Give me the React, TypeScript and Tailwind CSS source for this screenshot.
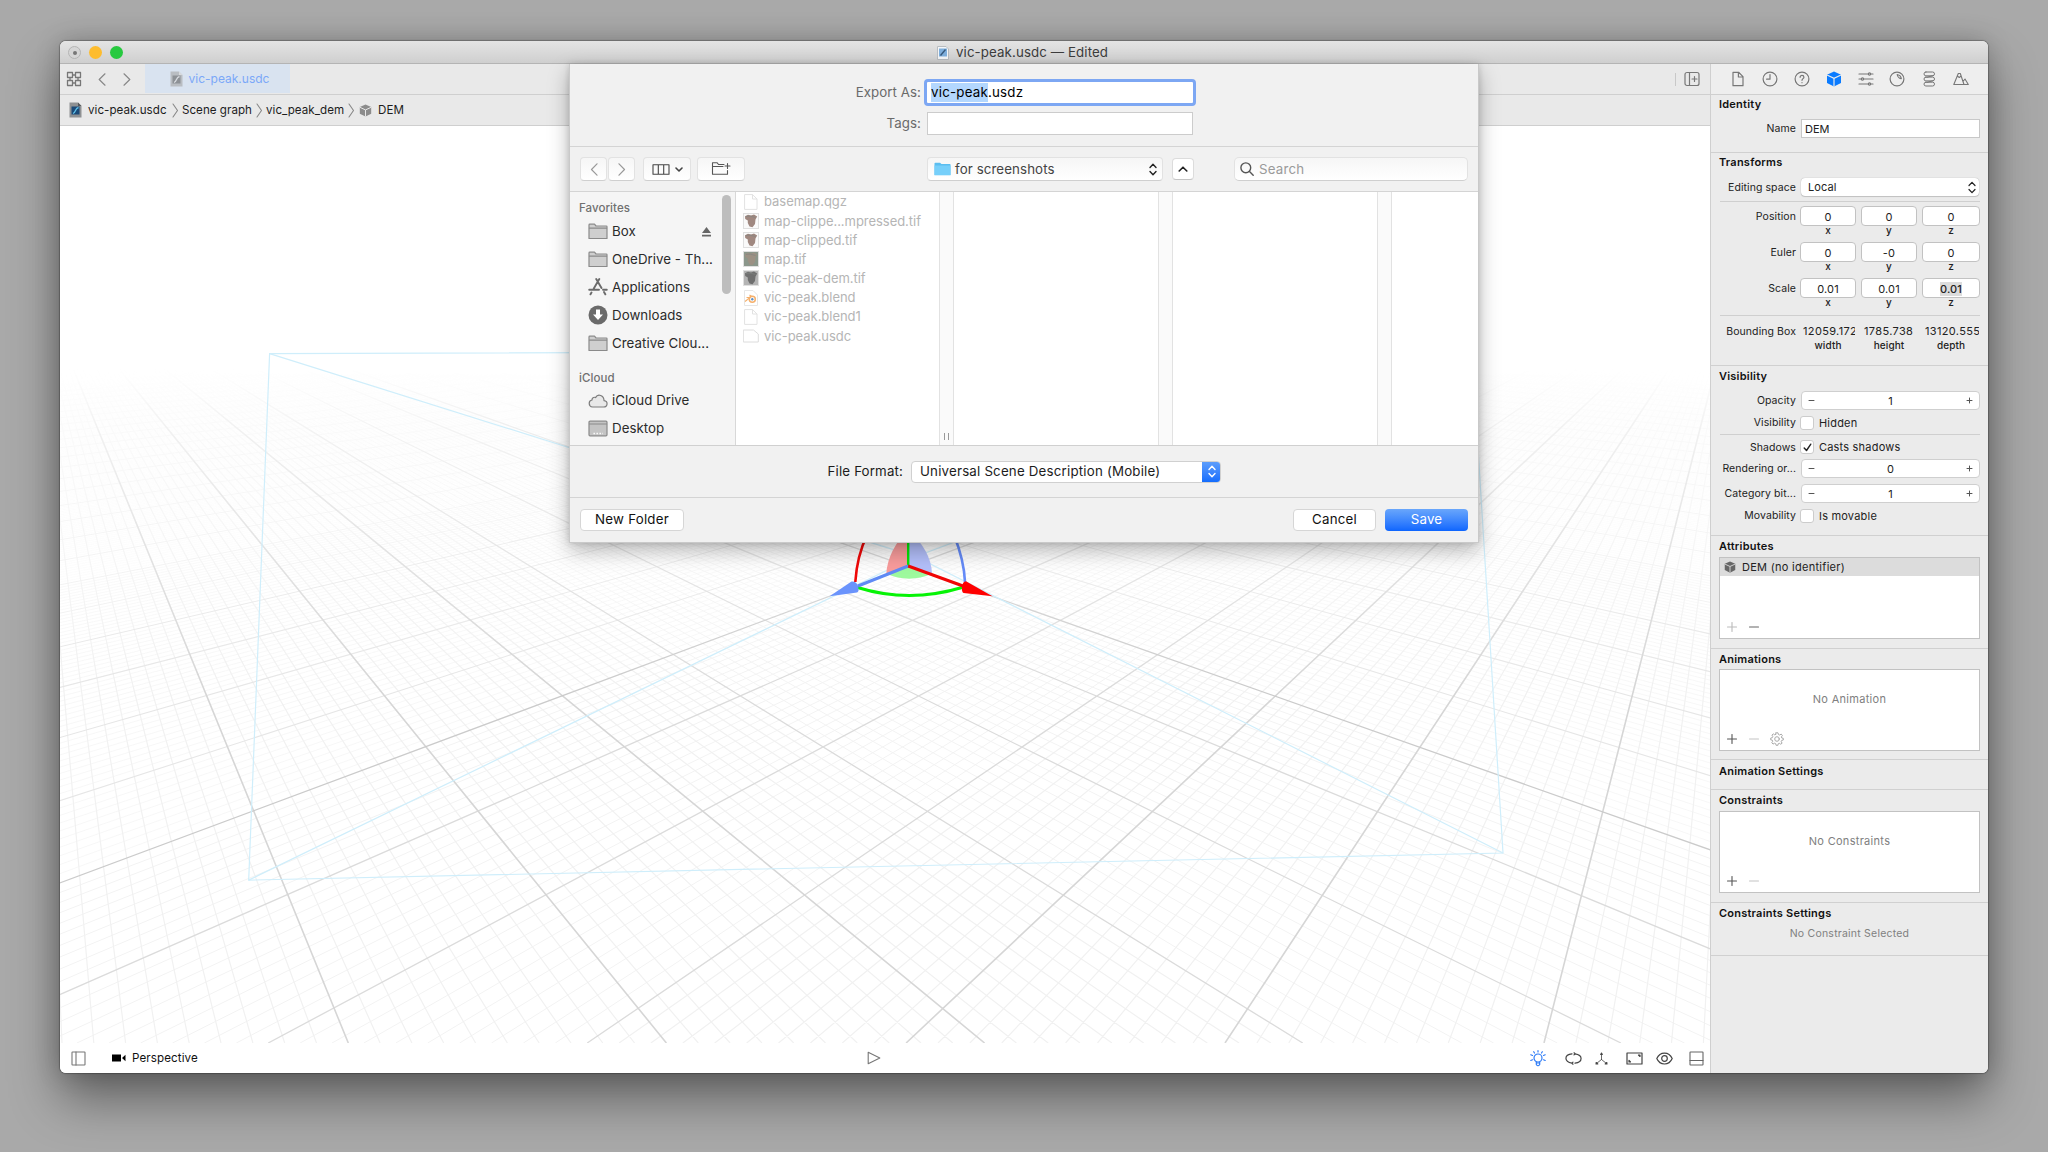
import React from "react";
import { clsx } from "clsx";

const HORIZON = 255.5;
const TOP = 350;
const BOTTOM = 1043;

/* Perspective ground plane: every family of parallels meets in one point on the horizon. */
function family(vx: number, base: number, dir: number, step: number, from: number, to: number, skip: number) {
  let d = "";
  for (let i = from; i <= to; i++) {
    if (skip && i % skip === 0) continue;
    const s = dir * (base + i * step);
    const x1 = vx + s * (TOP - HORIZON);
    const x2 = vx + s * (BOTTOM - HORIZON);
    d += `M${x1.toFixed(1)} ${TOP}L${x2.toFixed(1)} ${BOTTOM}`;
  }
  return d;
}

const LEFT_VP = 27;
const RIGHT_VP = 1744;
const minor = (from: number, to: number) =>
  family(LEFT_VP, 2.832, 1, 0.0404, from, to, 10) + family(RIGHT_VP, 2.684, -1, 0.0405, from, to, 10);
const major = (from: number, to: number) =>
  family(LEFT_VP, 2.832, 1, 0.404, from, to, 0) + family(RIGHT_VP, 2.684, -1, 0.405, from, to, 0);

function Scene() {
  return (
    <svg viewBox="60 126 1650 917" className="block h-[917px] w-[1650px] bg-white">
      <defs>
        <linearGradient id="fade" x1="0" y1="126" x2="0" y2="1043" gradientUnits="userSpaceOnUse">
          <stop offset="0.265" stopColor="#000" />
          <stop offset="0.33" stopColor="#555" />
          <stop offset="0.46" stopColor="#aaa" />
          <stop offset="0.62" stopColor="#fff" />
        </linearGradient>
        <mask id="ground" maskUnits="userSpaceOnUse" x="60" y="126" width="1650" height="917">
          <rect x="60" y="126" width="1650" height="917" fill="url(#fade)" />
        </mask>
      </defs>
      <g mask="url(#ground)" fill="none">
        <path d={minor(60, 260)} stroke="#fafafa" strokeWidth="0.8" />
        <path d={minor(1, 59)} stroke="#f6f6f6" strokeWidth="0.9" />
        <path d={minor(-30, -1)} stroke="#f3f3f3" strokeWidth="1" />
        <path d={minor(-75, -31)} stroke="#f1f1f1" strokeWidth="1.2" />
        <path d={major(5, 24)} stroke="#efefef" strokeWidth="1" />
        <path d={major(1, 4)} stroke="#e6e6e6" strokeWidth="1.1" />
        <path d={major(-3, -1)} stroke="#dbdbdb" strokeWidth="1.3" />
        <path d={major(-7, -4)} stroke="#d6d6d6" strokeWidth="1.6" />
        <path d={major(0, 0)} stroke="#cbcbcb" strokeWidth="1.3" />
      </g>
      <g fill="none" stroke="#cfeefb" strokeWidth="1.2">
        <path d="M269.6 353.6L1472 350L1503 853L248.7 880.1Z" />
        <path d="M269.6 353.6L915.5 556.5L1472 350M248.7 880.1L915.5 556.5L1503 853" />
      </g>
      <path d="M908 530Q888 550 886.3 573.5L908.2 566Z" fill="#f99c9c" />
      <path d="M908 530Q931 550 932 573.5L908.2 566Z" fill="#b3bffa" />
      <path d="M886.3 573.8Q909 583.5 932 573.8L908.2 566Z" fill="#9df99d" />
      <g fill="none">
        <path d="M867 535Q857 556 855.3 582" stroke="#f00808" strokeWidth="2.6" />
        <path d="M954 535Q964 560 965 582" stroke="#658bf8" strokeWidth="2.6" />
        <path d="M857.5 587.5Q909 603.5 962 587.5" stroke="#06f306" strokeWidth="3" />
        <path d="M908.2 566V530" stroke="#06e606" strokeWidth="2.4" />
        <path d="M908.2 566L858 586" stroke="#5f8af5" strokeWidth="3" />
        <path d="M908.2 566L963 586" stroke="#f00505" strokeWidth="3" />
      </g>
      <path d="M829.6 596.2L851.5 581.5Q856.5 581 858 586Q859.5 591.5 857 592.5Z" fill="#6a93fc" />
      <path d="M992.5 596.2L966 581.3Q962.5 581.5 962 587Q961.5 592 963.5 593Z" fill="#fe0000" />
    </svg>
  );
}

function Svg({ w, h, className, children, sw = 1.2 }: { w: number; h: number; className?: string; children: React.ReactNode; sw?: number }) {
  return (
    <svg
      width={w}
      height={h}
      viewBox={`0 0 ${w} ${h}`}
      fill="none"
      stroke="currentColor"
      strokeWidth={sw}
      strokeLinecap="round"
      strokeLinejoin="round"
      className={clsx("block shrink-0", className)}
    >
      {children}
    </svg>
  );
}

function Cube({ className, size = 13, line = "#ebebeb" }: { className?: string; size?: number; line?: string }) {
  return (
    <svg width={size} height={size} viewBox="0 0 16 16" className={clsx("block shrink-0", className)}>
      <path d="M8 .5L15 3.8V12L8 15.5L1 12V3.8Z" fill="currentColor" />
      <path d="M1 4L8 7.3L15 4M8 7.3V15.5" fill="none" stroke={line} strokeWidth="1.2" />
    </svg>
  );
}

function FileBadge({ dim }: { dim?: boolean }) {
  return (
    <svg width="13" height="16" viewBox="0 0 13 16" className="block shrink-0">
      <path d="M.5 .5H9L12.5 4V15.5H.5Z" fill={dim ? "#b9bdc2" : "#8f9193"} />
      <path d="M9 .5L12.5 4H9Z" fill={dim ? "#d9dbde" : "#55585b"} />
      <rect x="2.5" y="4.5" width="8" height="8" fill={dim ? "#8d9196" : "#1b4a78"} />
      <path d="M4 11.5Q5.5 11 6.5 8.5T9.5 5.5" stroke={dim ? "#d8dbe0" : "#5fc0e8"} strokeWidth="1.3" fill="none" />
    </svg>
  );
}

function UpDown({ className, sw = 1.4 }: { className?: string; sw?: number }) {
  return (
    <Svg w={8} h={13} sw={sw} className={className}>
      <path d="M1 4.5L4 1.3L7 4.5M1 8.5L4 11.7L7 8.5" />
    </Svg>
  );
}

/* ---------- inspector ---------- */

const tabIcons: { key: string; icon: React.ReactNode }[] = [
  { key: "file", icon: <Svg w={16} h={16}><path d="M3 1.3H8.6L13 5.6V14.7H3ZM8.4 1.5V6H12.8" /></Svg> },
  { key: "history", icon: <Svg w={16} h={16}><circle cx="8" cy="8" r="6.9" /><path d="M8 3.6V8.2H4.6" /></Svg> },
  { key: "help", icon: <Svg w={16} h={16}><circle cx="8" cy="8" r="6.9" /><path d="M6.1 6.3C6.1 3.8 9.9 3.9 9.9 6.2C9.9 7.6 8 7.7 8 9.3M8 11.5V11.7" /></Svg> },
  { key: "node", icon: <Cube size={16} className="text-[#0a7bff]" /> },
  { key: "sliders", icon: <Svg w={16} h={16}><path d="M1 3H10M13 3H15M1 8H3M6 8H15M1 13H10M13 13H15" /><circle cx="11.5" cy="3" r="1.1" /><circle cx="4.5" cy="8" r="1.1" /><circle cx="11.5" cy="13" r="1.1" /></Svg> },
  { key: "material", icon: <Svg w={16} h={16}><circle cx="8" cy="8" r="6.9" /><path d="M8.2 3.5C10.5 4 12 5.5 12.3 7.7C11 7.5 8.5 6 8.2 3.5Z" /></Svg> },
  { key: "physics", icon: <Svg w={16} h={16} sw={1}><rect x="3" y="1" width="10.500" height="3.800" rx="1.900" /><rect x="3" y="6.100" width="10.500" height="3.800" rx="1.900" /><rect x="3" y="11.200" width="10.500" height="3.800" rx="1.900" /><path d="M12 4.600L6 6.300M12 9.700L6 11.400" /></Svg> },
  { key: "scene", icon: <Svg w={16} h={16} sw={1.1}><path d="M.8 13.5L5.300 2.500H7.300L11 13.500ZM10 10.500L12 8L15.300 13.500H11M4.300 5L6.300 6.500L8 5" /></Svg> },
];

function Section({ title, className, titleClass, children }: { title: string; className: string; titleClass: string; children?: React.ReactNode }) {
  return (
    <section className={clsx("shrink-0 border-b border-[#d0d0d0]", className)}>
      <h2 className={clsx("flex items-center pl-[8px] text-[11px] font-semibold tracking-[0.23px] text-[#111]", titleClass)}>{title}</h2>
      {children}
    </section>
  );
}

const rowLabel = "w-[85px] shrink-0 whitespace-nowrap text-right text-[10.5px] tracking-[0.08px] text-[#222]";

function Row({ label, className, children }: { label: string; className?: string; children: React.ReactNode }) {
  return (
    <div className={clsx("flex items-center pr-2", className)}>
      <span className={clsx(rowLabel, "mr-[5px] pt-px")}>{label}</span>
      {children}
    </div>
  );
}

function Triple({ label, values, sub, selected, plain, className }: { label: string; values: string[]; sub: string[]; selected?: boolean; plain?: boolean; className?: string }) {
  return (
    <div className={className}>
      <div className="flex h-5 items-center">
        <span className={clsx(rowLabel, "mr-[4px] pt-px")}>{label}</span>
        <div className="grid grid-cols-[56px_56px_58px] gap-[5px]">
          {values.map((v, i) =>
            plain ? (
              <span key={i} className="ml-[3px] mr-px h-5 overflow-hidden whitespace-nowrap text-[11px] leading-5 tracking-[0.35px] text-[#222]">{v}</span>
            ) : (
              <span key={i} className="flex h-5 items-center justify-center rounded-[4px] border border-[#c2c2c2] bg-white pt-px text-[11px] text-[#222]">
                <span className={clsx("leading-[14px] tracking-[0.15px]", selected && i === 2 && "bg-[#dcdcdc] font-medium")}>{v}</span>
              </span>
            ),
          )}
        </div>
      </div>
      <div className="ml-[89px] grid h-[10px] grid-cols-[56px_56px_58px] gap-[5px]">
        {sub.map((s) => (
          <span key={s} className="text-center text-[10px] font-medium leading-[9px] tracking-[0.1px] text-[#222]">{s}</span>
        ))}
      </div>
    </div>
  );
}

function Stepper({ value }: { value: string }) {
  return (
    <div className="flex h-[19px] w-[179px] items-center justify-between rounded-[4px] border border-[#cfcfcf] bg-white px-[6px] text-[#555]">
      <Svg w={7} h={7} sw={1}><path d="M1 3.5H6" /></Svg>
      <span className="pt-px text-[11px] text-[#222]">{value}</span>
      <Svg w={7} h={7} sw={1}><path d="M1 3.5H6M3.5 1V6" /></Svg>
    </div>
  );
}

function Check({ label, on }: { label: string; on?: boolean }) {
  return (
    <div className="flex items-center gap-[5px]">
      <span className="-ml-px flex h-[14px] w-[14px] items-center justify-center rounded-[3px] border border-[#cccccc] bg-white text-[#222]">
        {on && <Svg w={9} h={9} sw={1.4}><path d="M1.2 5L3.5 7.5L7.8 1.2" /></Svg>}
      </span>
      <span className="pt-px text-[11px] tracking-[0.2px] text-[#222]">{label}</span>
    </div>
  );
}

function Plus({ faint }: { faint?: boolean }) {
  return <Svg w={10} h={10} sw={1.1} className={faint ? "text-[#bbbbbb]" : "text-[#555]"}><path d="M.5 5H9.5M5 .5V9.5" /></Svg>;
}
function Minus({ faint }: { faint?: boolean }) {
  return <Svg w={10} h={10} sw={1.1} className={faint ? "text-[#c4c4c4]" : "text-[#666]"}><path d="M.5 5H9.5" /></Svg>;
}

function ListBox({ children, footer }: { children: React.ReactNode; footer: React.ReactNode }) {
  return (
    <div className="ml-[8px] flex h-[82px] w-[261px] flex-col border border-[#c2c2c2] bg-white">
      <div className="flex-1">{children}</div>
      <div className="flex h-[23px] items-center gap-3 pl-[7px]">{footer}</div>
    </div>
  );
}

function Gear() {
  return (
    <Svg w={14} h={14} sw={1} className="-ml-px text-[#aaaaaa]">
      <path d="M6 .8H8L8.4 2.5L9.6 3L11.2 2.1L12.4 3.5L11.4 4.9L11.8 6L13.3 6.3V8L11.7 8.4L11.2 9.6L12.1 11.2L10.7 12.2L9.3 11.3L8.2 11.8L7.9 13.3H6.1L5.7 11.7L4.5 11.2L3 12.1L1.8 10.7L2.7 9.3L2.2 8.1L.7 7.8V6.1L2.3 5.7L2.8 4.5L1.9 3.1L3.3 1.9L4.7 2.8L5.7 2.4Z" />
      <circle cx="7" cy="7" r="2.3" />
    </Svg>
  );
}

function Inspector() {
  return (
    <aside className="flex w-[278px] shrink-0 flex-col border-l border-[#cfcfcf] bg-[#ebebeb]">
      <div className="flex h-[31px] shrink-0 items-center border-b border-[#cfcfcf] bg-[#eeeeee] pl-[11px] text-[#777]">
        {tabIcons.map((t) => (
          <div key={t.key} className="flex w-[31.9px] justify-center">{t.icon}</div>
        ))}
      </div>
      <Section title="Identity" className="h-[58px]" titleClass="h-[19px]">
        <Row label="Name" className="mt-[5px] h-[19px]">
          <div className="flex h-[19px] w-[180px] items-center border border-[#c8c8c8] bg-white pl-[3px] pt-px text-[11px] text-[#222]">DEM</div>
        </Row>
      </Section>
      <Section title="Transforms" className="h-[213px]" titleClass="h-[19px]">
        <Row label="Editing space" className="mt-[6px] h-[18px]">
          <div className="flex h-[18px] w-[178px] items-center justify-between rounded-[4px] bg-white pl-[7px] pr-[3px] text-[11px] tracking-[0.1px] text-[#222] shadow-[0_0_1px_rgba(0,0,0,.35),0_1px_1px_rgba(0,0,0,.15)]">
            Local
            <UpDown sw={1.2} />
          </div>
        </Row>
        <div className="ml-[9px] mr-2 mt-[5px] h-px bg-[#cfcfcf]" />
        <Triple className="mt-[4px]" label="Position" values={["0", "0", "0"]} sub={["x", "y", "z"]} />
        <Triple className="mt-[6px]" label="Euler" values={["0", "-0", "0"]} sub={["x", "y", "z"]} />
        <Triple className="mt-[6px]" label="Scale" values={["0.01", "0.01", "0.01"]} sub={["x", "y", "z"]} selected />
        <div className="ml-[9px] mr-2 mt-[7px] h-px bg-[#cfcfcf]" />
        <Triple className="mt-[5px]" label="Bounding Box" values={["12059.172", "1785.738", "13120.555"]} sub={["width", "height", "depth"]} plain />
      </Section>
      <Section title="Visibility" className="h-[170px]" titleClass="h-[20px]">
        <Row label="Opacity" className="mt-[5px] h-[19px]"><Stepper value="1" /></Row>
        <Row label="Visibility" className="mt-[3px] h-[19px]"><Check label="Hidden" /></Row>
        <div className="ml-[9px] mr-2 mt-[2px] h-px bg-[#cfcfcf]" />
        <Row label="Shadows" className="mt-[3px] h-[18px]"><Check label="Casts shadows" on /></Row>
        <Row label="Rendering or..." className="mt-[3px] h-[19px]"><Stepper value="0" /></Row>
        <Row label="Category bit..." className="mt-[6px] h-[19px]"><Stepper value="1" /></Row>
        <Row label="Movability" className="mt-[3px] h-[19px]"><Check label="Is movable" /></Row>
      </Section>
      <Section title="Attributes" className="h-[113px]" titleClass="h-[21px]">
        <ListBox footer={<><Plus faint /><Minus /></>}>
          <div className="flex h-[18px] items-center bg-[#dcdcdc] pl-[4px] text-[11px] tracking-[0.28px] text-[#222]">
            <Cube size={12} line="#dcdcdc" className="mr-[6px] text-[#666]" />
            <span className="pt-px">DEM (no identifier)</span>
          </div>
        </ListBox>
      </Section>
      <Section title="Animations" className="h-[111px]" titleClass="h-[20px]">
        <ListBox footer={<><Plus /><Minus faint /><Gear /></>}>
          <div className="pt-[20px] text-center text-[11px] leading-[18px] tracking-[0.3px] text-[#808080]">No Animation</div>
        </ListBox>
      </Section>
      <Section title="Animation Settings" className="h-[30px]" titleClass="h-[22px]" />
      <Section title="Constraints" className="h-[113px]" titleClass="h-[21px]">
        <ListBox footer={<><Plus /><Minus faint /></>}>
          <div className="pt-[20px] text-center text-[11px] leading-[18px] tracking-[0.3px] text-[#808080]">No Constraints</div>
        </ListBox>
      </Section>
      <Section title="Constraints Settings" className="h-[53px]" titleClass="h-[20px]">
        <div className="mt-[2px] text-center text-[10.5px] leading-[18px] tracking-[0.22px] text-[#808080]">No Constraint Selected</div>
      </Section>
    </aside>
  );
}

/* ---------- save dialog ---------- */

function FolderIcon() {
  return (
    <Svg w={20} h={17} className="text-[#8a8a8a]">
      <path d="M1 15.5V2Q1 1.2 1.8 1.2H6.5L8 3H18.3Q19 3 19 3.7V15.5Z" fill="#cfcfcf" />
      <path d="M1.5 5.2H18.5" />
    </Svg>
  );
}

const sidebar = [
  { label: "Box", icon: <FolderIcon />, eject: true },
  { label: "OneDrive - Th...", icon: <FolderIcon /> },
  {
    label: "Applications",
    icon: <Svg w={20} h={18} sw={1.9} className="text-[#6b6b6b]"><path d="M8.2 1L13.5 10M16 14L17.3 16.3M11.3 1L5.8 10.5M1.2 11.8H11M15 11.8H18.8M3.5 14.5L2.5 16.3" /></Svg>,
  },
  {
    label: "Downloads",
    icon: <svg width="20" height="20" viewBox="0 0 20 20" className="block shrink-0"><circle cx="10" cy="10" r="9.5" fill="#6a6a6a" /><path d="M8 4.5H12V9.5H15L10 15L5 9.5H8Z" fill="#fff" /></svg>,
  },
  { label: "Creative Clou...", icon: <FolderIcon /> },
];

const icloud = [
  {
    label: "iCloud Drive",
    icon: <Svg w={20} h={16} className="text-[#7c7c7c]"><path d="M4.5 14H15.5C20 14 20.3 8 16 7.6C16 2.5 10 .2 7.5 4.6C5.8 3.6 3.8 5 4 7C.2 7.5 .2 13.6 4.5 14Z" fill="#e8e8e8" /></Svg>,
  },
  {
    label: "Desktop",
    icon: <Svg w={20} h={17} className="text-[#8a8a8a]"><rect x="1" y="1.2" width="18" height="14.6" rx="1" fill="#c4c4c4" /><path d="M1.5 4H18.5" /><path d="M5.5 13.5H15" stroke="#fff" strokeWidth="1.6" strokeDasharray="1.4 1.6" strokeLinecap="butt" /></Svg>,
  },
];

function SideItem({ label, icon, eject }: { label: string; icon: React.ReactNode; eject?: boolean }) {
  return (
    <div className="flex h-[27.8px] items-center pl-[18px] pr-[24px] text-[13.3px] tracking-[0.04px] text-[#2b2b2b]">
      <span className="mr-[4px] flex w-5 justify-center">{icon}</span>
      <span className="whitespace-nowrap pt-px">{label}</span>
      {eject && (
        <svg width="9" height="10" viewBox="0 0 9 10" className="ml-auto block"><path d="M4.5 0L9 6H0ZM0 7.7H9V9.4H0Z" fill="#666" /></svg>
      )}
    </div>
  );
}

function Page() {
  return <Svg w={14} h={16} sw={1} className="text-[#e2e2e2]"><path d="M1 .6H8.5L13 5V15.4H1ZM8.5 .8V5H12.8" /></Svg>;
}

function Thumb({ bg, fg }: { bg: string; fg: string }) {
  return (
    <svg width="16" height="16" viewBox="0 0 16 16" className="block">
      <rect x=".5" y=".5" width="15" height="15" fill={bg} stroke="#e0e0e0" />
      <path d="M2 3.2L5 1.8L8 2.5L11 1.6L14.2 3.6L12.500 6.500L12 11L9.500 14.200L6.500 13.500L4.800 10V7.500L2.200 6Z" fill={fg} />
      <path d="M3 3.500L7 3L12.500 4.500" stroke="#7f8480" strokeWidth="1.200" fill="none" opacity=".6" />
    </svg>
  );
}

const files = [
  { name: "basemap.qgz", icon: <Page /> },
  { name: "map-clippe...mpressed.tif", icon: <Thumb bg="#fafafa" fg="#a08880" /> },
  { name: "map-clipped.tif", icon: <Thumb bg="#fafafa" fg="#a08880" /> },
  { name: "map.tif", icon: <Thumb bg="#8b978b" fg="#9c9184" /> },
  { name: "vic-peak-dem.tif", icon: <Thumb bg="#b4b4b4" fg="#6f6f6f" /> },
  {
    name: "vic-peak.blend",
    icon: (
      <svg width="14" height="16" viewBox="0 0 14 16" className="block">
        <path d="M.5 .5H9L13.5 5V15.5H.5Z" fill="#fff" stroke="#e6e6e6" />
        <circle cx="8.3" cy="9.3" r="3" fill="none" stroke="#f5b06c" strokeWidth="1.500" />
        <circle cx="8.3" cy="9.3" r="1.2" fill="#5b8fc7" />
        <path d="M1 11.5L6 7.5M2.5 7.5H7M5.5 5L8.5 7" stroke="#f5b06c" strokeWidth="1.100" />
      </svg>
    ),
  },
  { name: "vic-peak.blend1", icon: <Page /> },
  { name: "vic-peak.usdc", icon: <Svg w={16} h={14} sw={1} className="text-[#dcdcdc]"><path d="M.7 1H10.5L15.3 5V13H.7Z" /></Svg> },
];

const softBtn = "flex items-center justify-center rounded-[4px] border border-[#e2e2e2] border-b-[#cfcfcf] bg-gradient-to-b from-[#f6f6f6] to-white";

function Splitter({ grip }: { grip?: boolean }) {
  return (
    <div className="flex w-[15px] shrink-0 items-end justify-center border-x border-[#e2e2e2] bg-[#fafafa] pb-[5px]">
      {grip && <span className="flex gap-[3px]"><i className="h-[7px] w-px bg-[#999]" /><i className="h-[7px] w-px bg-[#999]" /></span>}
    </div>
  );
}

function SaveDialog() {
  return (
    <div className="absolute left-[509px] top-[23px] flex h-[479px] w-[910px] flex-col border-x border-b border-[#c9c9c9] bg-[#f1f1f1] font-[Inter,sans-serif] text-[13.3px] tracking-[0.06px] shadow-[0_8px_20px_rgba(0,0,0,.28),0_0_6px_rgba(0,0,0,.15)]">
      <div className="flex h-[83px] shrink-0 flex-col border-b border-[#d4d4d4] pt-[18px] text-[#6a6a6a]">
        <div className="flex h-[21px] items-center">
          <span className="mr-[6px] w-[351px] text-right">Export As:</span>
          <div className="flex h-[21px] w-[266px] items-center rounded-[1px] bg-white pl-[4px] tracking-[0.22px] text-black outline-[3px] outline-[#7da7f3] outline">
            <span className="bg-[#b3d7fe]">vic-peak</span>
            <span>.usdz</span>
          </div>
        </div>
        <div className="mt-[9px] flex h-[23px] items-center">
          <span className="mr-[6px] w-[351px] pt-px text-right">Tags:</span>
          <div className="h-[23px] w-[266px] border border-[#cccccc] bg-white" />
        </div>
      </div>
      <div className="flex h-[45px] shrink-0 items-center border-b border-[#d4d4d4] pl-[10px] text-[#555]">
        <span className={clsx(softBtn, "h-6 w-[27px] text-[#999]")}><Svg w={8} h={13}><path d="M7 .8L1.5 6.5L7 12.2" /></Svg></span>
        <span className={clsx(softBtn, "ml-px h-6 w-[27px] text-[#999]")}><Svg w={8} h={13}><path d="M1 .8L6.5 6.5L1 12.2" /></Svg></span>
        <span className={clsx(softBtn, "ml-[8px] h-6 w-[48px] gap-[5px] text-[#444]")}>
          <Svg w={18} h={11} sw={1.1}><path d="M1 .7H17V10.3H1ZM6.3 .7V10.3M11.7 .7V10.3" /></Svg>
          <Svg w={8} h={5} sw={1.6}><path d="M1 1L4 4L7 1" /></Svg>
        </span>
        <span className={clsx(softBtn, "ml-[6px] h-6 w-[48px] text-[#555]")}>
          <Svg w={20} h={14} sw={1.1}><path d="M13 2.5H7.5L6 .7H1.5V12.3H16.5V8.5M1.5 4.5H12M16.5 1.5V6.5M14 4H19" /></Svg>
        </span>
        <div className="ml-[182px] flex h-6 w-[236px] items-center rounded-[4px] border border-[#e2e2e2] border-b-[#cfcfcf] bg-gradient-to-b from-[#f6f6f6] to-white pl-[6px] pr-[5px] text-[#444]">
          <svg width="17" height="14" viewBox="0 0 17 14" className="mr-[4px] block"><path d="M.5 1.5Q.5 .7 1.3 .7H6L7.5 2H16Q16.5 2 16.5 2.7V13H.5Z" fill="#5bbef0" /><path d="M.5 3.5H16.5V13.3H.5Z" fill="#76cffa" /></svg>
          <span className="pt-px tracking-[0.1px]">for screenshots</span>
          <UpDown className="ml-auto text-[#222]" />
        </div>
        <span className="ml-[9px] flex h-[22px] w-[22px] items-center justify-center rounded-[4px] border border-[#dcdcdc] border-b-[#c4c4c4] bg-white text-[#222]">
          <Svg w={10} h={6} sw={1.6}><path d="M1.2 5L5 1.2L8.8 5" /></Svg>
        </span>
        <div className="ml-[40px] flex h-6 w-[234px] items-center gap-[5px] rounded-[5px] border border-[#e2e2e2] border-b-[#cfcfcf] bg-gradient-to-b from-[#f6f6f6] to-white pl-[5px] text-[#9a9a9a]">
          <Svg w={14} h={14} sw={1.4} className="text-[#555]"><circle cx="5.8" cy="5.8" r="4.9" /><path d="M9.5 9.5L13.2 13.2" /></Svg>
          <span className="pt-px tracking-[0.2px]">Search</span>
        </div>
      </div>
      <div className="flex h-[254px] shrink-0 border-b border-[#d0d0d0] bg-white">
        <div className="flex w-[166px] shrink-0 border-r border-[#d8d8d8] bg-[#f5f5f5]">
          <div className="w-full">
            <div className="mt-[8px] h-[18px] pl-[9px] text-[11.5px] font-medium leading-[17px] text-[#707070]">Favorites</div>
            {sidebar.map((s) => <SideItem key={s.label} {...s} />)}
            <div className="mt-[13px] h-[17px] pl-[9px] text-[11.5px] font-medium leading-[16px] text-[#707070]">iCloud</div>
            {icloud.map((s) => <SideItem key={s.label} {...s} />)}
          </div>
          <div className="-ml-[13px] mt-[3px] h-[99px] w-[9px] shrink-0 rounded-full bg-[#bdbdbd]" />
        </div>
        <div className="flex w-[203px] shrink-0 flex-col">
          {files.map((f) => (
            <div key={f.name} className="flex h-[19.2px] items-center text-[13px] tracking-[-0.04px] text-[#b5b5b5]">
              <span className="ml-[5px] mr-[4px] flex w-[19px] justify-center">{f.icon}</span>
              <span className="whitespace-nowrap pt-px">{f.name}</span>
            </div>
          ))}
        </div>
        <Splitter grip />
        <div className="w-[204px] shrink-0" />
        <Splitter />
        <div className="w-[204px] shrink-0" />
        <Splitter />
      </div>
      <div className="flex h-[52px] shrink-0 items-center border-b border-[#d4d4d4] text-[#1c1c1c]">
        <span className="mr-[8px] w-[333px] text-right tracking-[0.15px]">File Format:</span>
        <div className="flex h-[22px] w-[310px] items-center justify-between overflow-hidden rounded-[4px] border border-[#d0d0d0] bg-white pl-[8px]">
          <span className="whitespace-nowrap tracking-[0.2px]">Universal Scene Description (Mobile)</span>
          <span className="-mr-px flex h-[22px] w-[19px] items-center justify-center bg-gradient-to-b from-[#5f9ffb] to-[#0d6afd] text-white"><UpDown /></span>
        </div>
      </div>
      <div className="flex flex-1 items-center px-[10px] tracking-[0.22px] text-[#111]">
        <button className="h-[22px] w-[104px] rounded-[4px] border border-[#d6d6d6] bg-white">New Folder</button>
        <button className="ml-auto h-[22px] w-[83px] rounded-[4px] border border-[#d6d6d6] bg-white">Cancel</button>
        <button className="ml-[9px] h-[22px] w-[83px] rounded-[4px] bg-gradient-to-b from-[#69a6fb] to-[#0c65fe] text-white">Save</button>
      </div>
    </div>
  );
}

/* ---------- window ---------- */

function Crumb({ children, className }: { children: React.ReactNode; className: string }) {
  return (
    <>
      <span className={clsx("whitespace-nowrap pt-px", className)}>{children}</span>
      <Svg w={7} h={15} sw={1.1} className="mr-[3px] text-[#888]"><path d="M1 1L5.5 7.5L1 14" /></Svg>
    </>
  );
}

export default function App() {
  return (
    <div className="h-[1152px] w-[2048px] overflow-hidden bg-[#a9a9a9] pl-[60px] pt-[41px] font-[Inter,sans-serif]">
      <div className="relative h-[1032px] w-[1928px] rounded-[6px] shadow-[0_26px_50px_rgba(0,0,0,.42),0_0_26px_rgba(0,0,0,.2),0_0_1px_1px_rgba(0,0,0,.25)]">
        <div className="flex h-full w-full flex-col overflow-hidden rounded-[6px] bg-[#ebebeb]">
          <header className="flex h-[23px] shrink-0 items-center border-b border-[#b4b4b4] bg-gradient-to-b from-[#e4e4e4] to-[#cfcfcf] pl-[8px] pt-px">
            <div className="flex w-[869px] gap-[8px]">
              <i className="flex h-[13px] w-[13px] items-center justify-center rounded-full border border-[#b4b4b4] bg-[#d6d6d6]"><i className="h-1 w-1 rounded-full bg-[#777]" /></i>
              <i className="h-[13px] w-[13px] rounded-full bg-[#fdbc2e]" />
              <i className="h-[13px] w-[13px] rounded-full bg-[#27c93f]" />
            </div>
            <svg width="12" height="14" viewBox="0 0 12 14" className="block"><path d="M.5 .5H9L11.5 3V13.5H.5Z" fill="#f4f6f8" stroke="#b8bcc0" /><rect x="2" y="2.5" width="8" height="8" fill="#7fb0de" /><path d="M3.5 9.5L8.5 3.5" stroke="#37597d" strokeWidth="1.400" /></svg>
            <span className="ml-[7px] whitespace-nowrap pt-px text-[13.3px] tracking-[0.1px] text-[#3c3c3c]">vic-peak.usdc — Edited</span>
          </header>
          <div className="flex flex-1">
            <main className="flex w-[1650px] flex-col">
              <div className="flex h-[31px] shrink-0 items-center border-b border-[#cfcfcf] bg-[#e9e9e9] text-[#777]">
                <Svg w={16} h={16} className="ml-[6px]" sw={1.3}><path d="M1.5 1.5H6.5V6.5H1.5ZM9.5 1.5H14.5V6.5H9.5ZM1.5 9.5H6.5V14.5H1.5ZM9.5 9.5H14.5V14.5H9.5ZM6.5 4H9.5M4 6.5V9.5M12 6.5V9.5M6.5 12H9.5" /></Svg>
                <Svg w={8} h={13} className="ml-[16px] text-[#888]"><path d="M7 .8L1.2 6.5L7 12.2" /></Svg>
                <Svg w={8} h={13} className="ml-[17px] text-[#888]"><path d="M1 .8L6.8 6.5L1 12.2" /></Svg>
                <div className="ml-[14px] flex h-[29px] w-[145px] items-center justify-center gap-[6px] self-start bg-[#d9e3f0] pl-[4px] pt-px text-[12px] text-[#7ba8f8]">
                  <FileBadge dim />
                  vic-peak.usdc
                </div>
                <i className="ml-auto h-[13px] w-px bg-[#c8c8c8]" />
                <Svg w={16} h={16} className="ml-[8px] mr-[10px]"><rect x="1" y="1.5" width="14" height="13" rx="2" /><path d="M5.5 1.5V14.5M10.5 5.5V10.5M8 8H13" /></Svg>
              </div>
              <div className="flex h-[31px] shrink-0 items-center border-b border-[#cfcfcf] bg-[#e9e9e9] pl-[9px] text-[11.6px] tracking-[0.03px] text-[#1d1d1d]">
                <FileBadge />
                <Crumb className="ml-[6px] mr-[4px] w-[80px]">vic-peak.usdc</Crumb>
                <Crumb className="mr-[3px] w-[71px]">Scene graph</Crumb>
                <Crumb className="mr-[4px] w-[78px]">vic_peak_dem</Crumb>
                <Cube className="ml-[1px] mr-[6px] text-[#8c8c8c]" line="#e9e9e9" />
                <span className="pt-px">DEM</span>
              </div>
              <Scene />
              <div className="flex h-[30px] shrink-0 items-center bg-white text-[#444]">
                <Svg w={15} h={15} className="ml-[11px] text-[#777]" sw={1.1}><rect x="1" y="1" width="13" height="13" rx=".5" /><path d="M5 1V14" /></Svg>
                <svg width="14" height="8" viewBox="0 0 14 8" className="ml-[26px] block"><path d="M0 .5H9V7.5H0ZM10 4L13.5 .8V7.2Z" fill="#000" /></svg>
                <span className="ml-[6px] w-[735px] pt-px text-[11.6px] tracking-[0.1px] text-[#111]">Perspective</span>
                <Svg w={14} h={14} className="text-[#777]" sw={1.1}><path d="M1.2 1.2L12.8 7L1.2 12.8Z" /></Svg>
                <Svg w={16} h={17} className="ml-auto text-[#2f7cf6]" sw={1.2}><circle cx="8" cy="8" r="4" /><path d="M6.3 12V14.5Q8 17 9.7 14.5V12M6.3 13H9.7M8 .6V2M3.7 1.7L4.5 3M12.3 1.7L11.5 3M.8 4.8L2.5 5.5M15.2 4.8L13.5 5.5M.8 10.5L2.5 9.8M15.2 10.5L13.5 9.8" /></Svg>
                <Svg w={17} h={13} className="ml-[19px]" sw={1.2}><path d="M7 1.8C-1.2 2.5 -1 10 7 11.2M10 11.2C18 10.5 18.2 2.8 10 1.8M9 .8L10.2 1.8L9 2.9M8 10.1L6.9 11.2L8 12.2" /></Svg>
                <Svg w={13} h={13} className="ml-[13px]" sw={1.1}><path d="M6.5 7.5V1.5M6.5 7.5L1.5 11.5M6.5 7.5L11.5 11.5" strokeWidth=".8" /><path d="M5.7 2.500L6.500 1L7.300 2.500ZM1.200 10.500L1 12H2.800ZM11.800 10.500L12 12H10.200Z" fill="currentColor" /></Svg>
                <Svg w={17} h={13} className="ml-[18px]" sw={1.2}><path d="M1 1H16V12H1Z" /><path d="M12.500 3H14V4.500ZM3 8.500V10H4.500Z" fill="currentColor" /></Svg>
                <Svg w={17} h={13} className="ml-[13px]" sw={1.2}><path d="M.8 6.5C4 -.8 13 -.8 16.2 6.5C13 13.8 4 13.8 .8 6.5Z" /><circle cx="8.5" cy="6.5" r="2.8" /></Svg>
                <Svg w={15} h={15} className="ml-[16px] mr-[6px] text-[#666]" sw={1.1}><rect x="1" y="1" width="13" height="13" rx=".5" /><path d="M1 9.500H14" /></Svg>
              </div>
            </main>
            <Inspector />
          </div>
        </div>
        <SaveDialog />
      </div>
    </div>
  );
}
